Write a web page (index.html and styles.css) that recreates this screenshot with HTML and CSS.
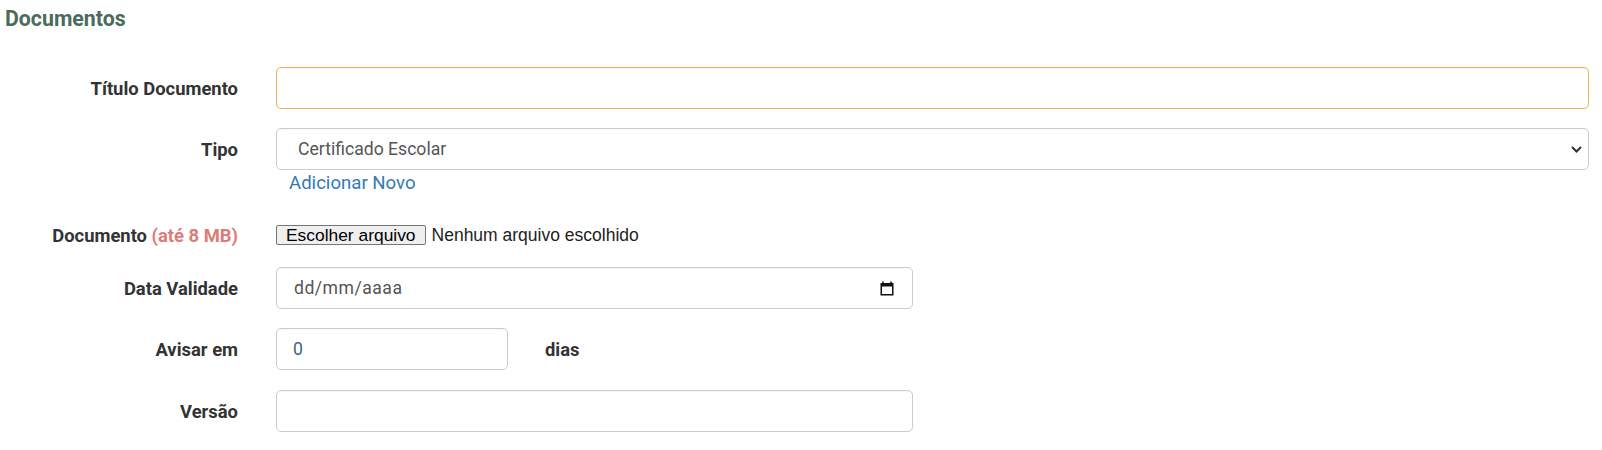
FILE: index.html
```html
<!DOCTYPE html>
<html lang="pt-BR">
<head>
<meta charset="utf-8">
<title>Documentos</title>
<link rel="stylesheet" href="styles.css">
</head>
<body>
<div class="page">
  <h2 class="section-title">Documentos</h2>
  <form class="form">
    <div class="row row-first">
      <label class="label">Título Documento</label>
      <div class="field"><input class="input input-focus" type="text"></div>
    </div>
    <div class="row">
      <label class="label">Tipo</label>
      <div class="field">
        <div class="input select">
          <span class="select-text">Certificado Escolar</span>
          <svg class="chevron" width="11" height="7" viewBox="0 0 11 7"><path d="M1 1l4.5 4.5L10 1" fill="none" stroke="#333" stroke-width="2"/></svg>
        </div>
        <a class="link" href="#">Adicionar Novo</a>
      </div>
    </div>
    <div class="row row-file">
      <label class="label">Documento <span class="hint">(até 8 MB)</span></label>
      <div class="field file-field">
        <span class="file-btn">Escolher arquivo</span>
        <span class="file-name">Nenhum arquivo escolhido</span>
      </div>
    </div>
    <div class="row row-date">
      <label class="label">Data Validade</label>
      <div class="field">
        <div class="input date half">
          <span class="date-text">dd/mm/aaaa</span>
          <svg class="cal" width="14" height="15" viewBox="0 0 14 15"><path d="M3 0.5v3M11 0.5v3" stroke="#111" stroke-width="1.5"/><rect x="1.25" y="2.75" width="11.5" height="11" fill="none" stroke="#111" stroke-width="1.5"/><rect x="1" y="2.5" width="12" height="3" fill="#111"/></svg>
        </div>
      </div>
    </div>
    <div class="row">
      <label class="label">Avisar em</label>
      <div class="field inline-field">
        <input class="input small num" type="text" value="0">
        <span class="unit">dias</span>
      </div>
    </div>
    <div class="row row-last">
      <label class="label">Versão</label>
      <div class="field"><input class="input half" type="text"></div>
    </div>
  </form>
</div>
</body>
</html>
```

FILE: styles.css
```css
* { box-sizing: border-box; }
html, body { margin: 0; padding: 0; background: #fff; }
body { font-family: Roboto, "Liberation Sans", Arial, sans-serif; color: #333; }

.page { padding: 0 13px 0 5px; }

.section-title {
  margin: 7px 0 0 0;
  font-size: 21.3px;
  line-height: 24px;
  font-weight: 700;
  color: #4b6b5b;
}

.form { margin-top: 36px; }

.row {
  display: grid;
  grid-template-columns: 233px 1fr;
  column-gap: 38px;
  align-items: start;
  margin-top: 19px;
}
.row-first { margin-top: 0; }
.row-file { margin-top: 21px; }
.row-date { margin-top: 11px; }
.row-last { margin-top: 20px; }

.label {
  height: 42px;
  display: flex;
  align-items: center;
  justify-content: flex-end;
  font-size: 18.4px;
  font-weight: 700;
  color: #333;
  white-space: pre;
}
.hint { color: #dc7b78; }

.field { min-width: 0; }

.input {
  display: block;
  width: 100%;
  height: 42px;
  border: 1px solid #ccc;
  border-radius: 5px;
  background: #fff;
  padding: 0 16px;
  font-family: Roboto, "Liberation Sans", Arial, sans-serif;
  font-size: 17.6px;
  color: #555;
  outline: none;
  box-shadow: inset 0 1px 1px rgba(0,0,0,0.04);
}
.input-focus { border-color: #f0ad55; }

.select {
  display: flex;
  align-items: center;
  justify-content: space-between;
  padding: 0 6px 0 21px;
}
.select-text { color: #555; }

.link {
  display: block;
  margin-top: 3px;
  padding-left: 13px;
  font-size: 18.6px;
  line-height: 20px;
  color: #337ab7;
  text-decoration: none;
}

.file-field {
  height: 42px;
  display: flex;
  align-items: center;
  gap: 6px;
}
.file-btn {
  display: inline-block;
  height: 20px;
  line-height: 18px;
  padding: 0 9px;
  border: 1px solid #767676;
  border-radius: 2px;
  background: #efefef;
  font-family: "Liberation Sans", Arial, sans-serif;
  font-size: 17.4px;
  color: #000;
}
.file-name {
  font-family: "Liberation Sans", Arial, sans-serif;
  font-size: 17.5px;
  color: #222;
}

.half { width: 637px; }

.date {
  display: flex;
  align-items: center;
  justify-content: space-between;
  padding: 0 18px 0 17px;
}
.date-text { color: #555; letter-spacing: 0.5px; }

.inline-field {
  display: flex;
  align-items: center;
  gap: 37px;
  height: 42px;
}
.small { width: 232px; }
.num { color: #3f5f8a; }
.unit {
  font-size: 18.4px;
  font-weight: 700;
  color: #333;
}
```
